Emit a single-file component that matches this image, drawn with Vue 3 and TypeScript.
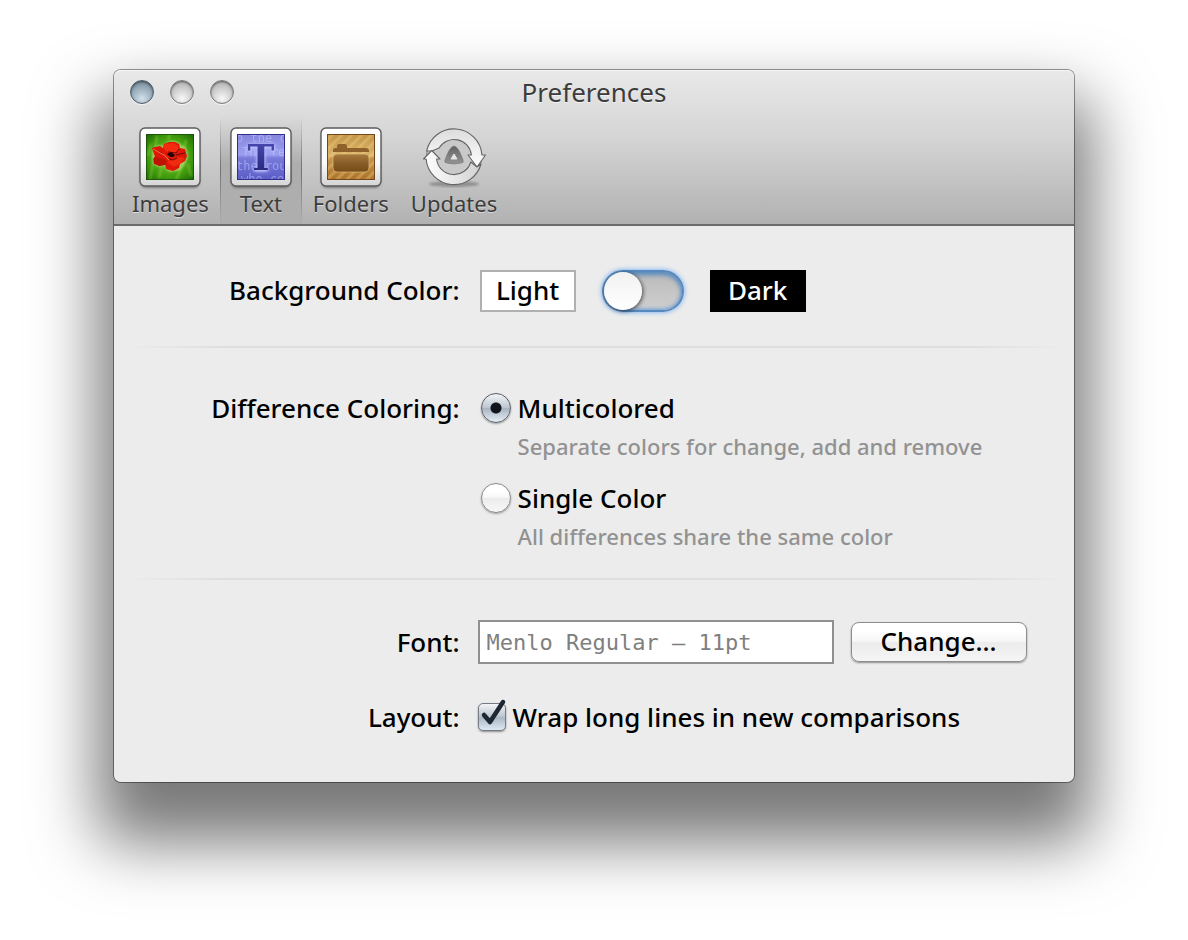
<script setup lang="ts">
import { ref } from 'vue'

type Pane = 'images' | 'text' | 'folders' | 'updates'

const panes: { id: Pane; label: string }[] = [
  { id: 'images', label: 'Images' },
  { id: 'text', label: 'Text' },
  { id: 'folders', label: 'Folders' },
  { id: 'updates', label: 'Updates' },
]
const windowButtons = ['Close', 'Minimize', 'Zoom']

const current = ref<Pane>('text')
const dark = ref(false)
const coloring = ref('multi')
const font = ref('Menlo Regular – 11pt')
const wrap = ref(true)
</script>

<template>
  <div class="desktop">
    <main class="window">
      <header class="chrome">
        <div class="titlebar">
          <div class="lights">
            <button
              v-for="(name, i) in windowButtons"
              :key="name"
              type="button"
              class="light"
              :class="{ active: i === 0 }"
              :aria-label="name"
            ></button>
          </div>
          <h1 class="title">Preferences</h1>
        </div>

        <nav class="toolbar">
          <button
            v-for="pane in panes"
            :key="pane.id"
            type="button"
            class="tool"
            :class="{ selected: current === pane.id }"
            @click="current = pane.id"
          >
            <svg v-if="pane.id === 'images'" class="icon" viewBox="0 0 64 64" aria-hidden="true">
              <defs>
                <linearGradient id="frame" x2="0" y2="1">
                  <stop offset="0" stop-color="#fff" />
                  <stop offset=".6" stop-color="#fafafa" />
                  <stop offset="1" stop-color="#d4d4d4" />
                </linearGradient>
                <radialGradient id="grass" cx=".5" cy=".5" r=".75">
                  <stop offset="0" stop-color="#7cc832" />
                  <stop offset=".6" stop-color="#3f9a0c" />
                  <stop offset="1" stop-color="#175a02" />
                </radialGradient>
                <filter id="soft"><feGaussianBlur stdDeviation="1.3" /></filter>
                <clipPath id="photo"><rect x="8" y="8" width="48" height="46" /></clipPath>
              </defs>
              <rect x="2" y="4" width="60" height="58" rx="6" fill="#000" opacity=".35" filter="url(#soft)" />
              <rect x="2" y="2" width="60" height="58" rx="5" fill="url(#frame)" stroke="#5c5c5c" stroke-width="1.4" />
              <rect x="8" y="8" width="48" height="46" fill="url(#grass)" />
              <g clip-path="url(#photo)">
                <g stroke="#9ad84a" stroke-width="2" opacity=".5" filter="url(#soft)">
                  <path d="M12 54L15 36M21 52L24 40M48 14L45 28M38 54L43 42M17 22L19 10M30 14L32 8M53 50L50 38M10 30L13 18" />
                </g>
                <path d="M14 26C15 20 21 18 26 20C28 14 39 13 43 19C49 20 52 29 48 36C45 42 43 45 37 45C31 47 27 44 26 39C20 43 15 39 14 34Z" fill="#d8e890" opacity=".6" filter="url(#soft)" />
              </g>
              <path d="M14 22L17 21L22 20L25 22L26 18L31 16L37 16L41 18L42 22L47 23L49 30L47 35L42 38L41 42L35 45L28 43L27 38L22 40L16 38L15 33L17 31Z" fill="#df1607" />
              <path d="M25 22L27 18L36 17L40 20L41 25L37 28L29 26Z" fill="#f42a10" />
              <path d="M16 31L25 33L29 35L27 39L21 40L16 37Z" fill="#bc1305" />
              <path d="M29 36L40 31L47 32L42 38L36 41Z" fill="#ef2b10" />
              <path d="M16 24L24 27L28 32L35 34L39 32M30 26L38 27L41 23M38 29L47 27" fill="none" stroke="#6e0803" stroke-width="1" />
              <path d="M15 23L26 29L31 34" fill="none" stroke="#ff6037" stroke-width="1.2" />
              <path d="M29 28L33 26L37 29L35 31L32 31Z" fill="#230303" />
              <rect x="8.5" y="8.5" width="47" height="45" fill="none" stroke="#164b05" opacity=".75" />
            </svg>

            <svg v-else-if="pane.id === 'text'" class="icon" viewBox="0 0 64 64" aria-hidden="true">
              <defs>
                <linearGradient id="page" x2="0" y2="1">
                  <stop offset="0" stop-color="#8584dd" />
                  <stop offset=".45" stop-color="#9c9ff0" />
                  <stop offset=".52" stop-color="#797bd9" />
                  <stop offset="1" stop-color="#5a5bc6" />
                </linearGradient>
                <linearGradient id="letter" x2="0" y2="1">
                  <stop offset="0" stop-color="#4d4fba" />
                  <stop offset="1" stop-color="#202274" />
                </linearGradient>
                <clipPath id="sheet"><rect x="8" y="8" width="48" height="46" /></clipPath>
              </defs>
              <rect x="2" y="4" width="60" height="58" rx="6" fill="#000" opacity=".35" filter="url(#soft)" />
              <rect x="2" y="2" width="60" height="58" rx="5" fill="url(#frame)" stroke="#5c5c5c" stroke-width="1.4" />
              <rect x="8" y="8" width="48" height="46" fill="url(#page)" />
              <g class="backtext" clip-path="url(#sheet)">
                <text x="7" y="16">o the c</text>
                <text x="13" y="30">Thr re</text>
                <text x="7" y="44">the rou</text>
                <text x="12" y="57">who co</text>
              </g>
              <text class="letter" x="32" y="44" text-anchor="middle" fill="url(#letter)">T</text>
              <rect x="8.5" y="8.5" width="47" height="45" fill="none" stroke="#2e2f86" />
            </svg>

            <svg v-else-if="pane.id === 'folders'" class="icon" viewBox="0 0 64 64" aria-hidden="true">
              <defs>
                <linearGradient id="wood" x2="0" y2="1">
                  <stop offset="0" stop-color="#c39544" />
                  <stop offset=".48" stop-color="#dcb66b" />
                  <stop offset=".52" stop-color="#c4944a" />
                  <stop offset="1" stop-color="#ad7428" />
                </linearGradient>
                <linearGradient id="leather" x2="0" y2="1">
                  <stop offset="0" stop-color="#a87c3c" />
                  <stop offset=".45" stop-color="#8c602a" />
                  <stop offset="1" stop-color="#774b17" />
                </linearGradient>
                <pattern id="stripes" width="7" height="7" patternUnits="userSpaceOnUse" patternTransform="rotate(45)">
                  <rect width="3" height="7" fill="#f3d592" opacity=".3" />
                </pattern>
              </defs>
              <rect x="2" y="4" width="60" height="58" rx="6" fill="#000" opacity=".35" filter="url(#soft)" />
              <rect x="2" y="2" width="60" height="58" rx="5" fill="url(#frame)" stroke="#5c5c5c" stroke-width="1.4" />
              <rect x="8" y="8" width="48" height="46" fill="url(#wood)" />
              <rect x="8" y="8" width="48" height="46" fill="url(#stripes)" />
              <path d="M14 26V24Q14 22 16 22H18V20Q18 18 20 18H26Q28 18 28 20V22H47Q50 22 50 25V26Z" fill="#8f622b" />
              <path d="M14 32Q14 28 18 28H46Q50 28 50 32V42Q50 46 46 46H18Q14 46 14 42Z" fill="url(#leather)" stroke="#e0bd7b" stroke-width=".7" />
              <rect x="8.5" y="8.5" width="47" height="45" fill="none" stroke="#74471a" />
            </svg>

            <svg v-else class="icon" viewBox="0 0 64 64" aria-hidden="true">
              <defs>
                <linearGradient id="ringR" x2="0" y2="1">
                  <stop offset="0" stop-color="#dcdcdc" />
                  <stop offset="1" stop-color="#fff" />
                </linearGradient>
                <linearGradient id="ringL">
                  <stop offset="0" stop-color="#fff" />
                  <stop offset="1" stop-color="#d2d2d2" />
                </linearGradient>
                <linearGradient id="delta" x2="0" y2="1">
                  <stop offset="0" stop-color="#626262" />
                  <stop offset="1" stop-color="#959595" />
                </linearGradient>
              </defs>
              <ellipse cx="32" cy="58" rx="25" ry="3" fill="#555" opacity=".45" filter="url(#soft)" />
              <circle cx="32" cy="31" r="27.5" fill="#c9c9c9" stroke="#777" />
              <g stroke="#666" stroke-width="1.1" stroke-linejoin="round">
                <path d="M4.600 25A28 28 0 0 1 59.900 29H63.500L55 41L46 29H49.400A17.500 17.500 0 0 0 17 22L10 25Z" fill="url(#ringR)" />
                <path d="M9.700 24.500L18 33H14.600A17.500 17.500 0 0 0 48.800 36L55 41L59 38A28 28 0 0 1 4.100 33H1.500Z" fill="url(#ringL)" />
              </g>
              <path d="M32 20Q36 20 41 34Q42 37 39 37Q32 39 25 37Q22 37 23 34Q28 20 32 20Z" fill="url(#delta)" stroke="#787878" stroke-width=".7" />
              <path d="M32 28L35 33H29Z" fill="#e4e4e4" stroke="#e4e4e4" stroke-linejoin="round" />
            </svg>
            <span class="tool-label">{{ pane.label }}</span>
          </button>
        </nav>
      </header>

      <form class="content" @submit.prevent>
        <section class="group background">
          <label class="caption" for="dark">Background Color:</label>
          <div class="field swatches">
            <span class="swatch lite">Light</span>
            <input id="dark" v-model="dark" class="switch" type="checkbox" role="switch" />
            <span class="swatch black">Dark</span>
          </div>
        </section>

        <section class="group coloring" role="radiogroup" aria-labelledby="coloring-caption">
          <span id="coloring-caption" class="caption">Difference Coloring:</span>
          <div class="field options">
            <div class="option">
              <label class="choice">
                <input v-model="coloring" class="radio" type="radio" name="coloring" value="multi" />
                Multicolored
              </label>
              <p class="hint">Separate colors for change, add and remove</p>
            </div>
            <div class="option">
              <label class="choice">
                <input v-model="coloring" class="radio" type="radio" name="coloring" value="single" />
                Single Color
              </label>
              <p class="hint">All differences share the same color</p>
            </div>
          </div>
        </section>

        <section class="group misc">
          <label class="caption" for="font">Font:</label>
          <div class="field font-row">
            <input id="font" v-model="font" class="font-name" type="text" readonly />
            <button type="button" class="change">Change…</button>
          </div>
          <span class="caption">Layout:</span>
          <div class="field">
            <label class="choice">
              <span class="tick">
                <input v-model="wrap" class="box" type="checkbox" />
                <svg v-if="wrap" class="mark" viewBox="0 0 32 34" aria-hidden="true">
                  <path d="M7 18L13 25L26 5" fill="none" stroke="#1b2733" stroke-width="4.500" stroke-linecap="round" stroke-linejoin="round" />
                </svg>
              </span>
              Wrap long lines in new comparisons
            </label>
          </div>
        </section>
      </form>
    </main>
  </div>
</template>

<style>
body {
  background: #fff;
}
</style>

<style scoped>
.desktop {
  box-sizing: border-box;
  min-height: 100vh;
  padding: 69px 113px 157px;
  overflow: hidden;
  font-family: "Noto Sans", "Open Sans", sans-serif;
  font-size: 26px;
  font-weight: 500;
  line-height: 36px;
  color: #000;
}
.window {
  border: 1px solid rgba(0, 0, 0, .4);
  border-radius: 8px;
  background: #ececec;
  background-clip: padding-box;
  box-shadow: 0 44px 64px 16px rgba(0, 0, 0, .53);
}
.chrome {
  border-bottom: 2px solid #6b6b6b;
  border-radius: 7px 7px 0 0;
  background: linear-gradient(#e9e9e9, #d4d4d4 45%, #b1b1b1);
  box-shadow: inset 0 1px #f6f6f6;
}
.titlebar {
  display: grid;
  grid-template-columns: 1fr auto 1fr;
  align-items: center;
  height: 44px;
  padding: 0 16px 2px;
}
.lights {
  display: flex;
  gap: 16px;
}
.light {
  width: 24px;
  height: 24px;
  padding: 0;
  border: 1px solid #7d7d7d;
  border-radius: 50%;
  background: radial-gradient(circle at 50% 80%, #f8f8f8, #d2d2d2 45%, #b4b4b4 80%);
  box-shadow: inset 0 1px 2px rgba(0, 0, 0, .5), 0 1px rgba(255, 255, 255, .7);
}
.light.active {
  border-color: #4f5d68;
  background: radial-gradient(circle at 50% 80%, #d3e1eb, #9aaebd 50%, #738795 85%);
}
.title {
  margin: 0;
  font-size: 26px;
  font-weight: 400;
  line-height: 36px;
  color: #3c3c3c;
  text-shadow: 0 1px rgba(255, 255, 255, .6);
}
.toolbar {
  display: flex;
  height: 108px;
  padding-left: 7px;
}
.tool {
  display: flex;
  flex-direction: column;
  align-items: center;
  box-sizing: border-box;
  min-width: 82px;
  padding: 10px 0 0;
  border: 0;
  background: none;
  font: inherit;
  color: #3c3c3c;
}
.tool.selected {
  background:
    linear-gradient(transparent, rgba(0, 0, 0, .35) 50%, transparent) left / 1px 100% no-repeat,
    linear-gradient(transparent, rgba(0, 0, 0, .35) 50%, transparent) right / 1px 100% no-repeat,
    linear-gradient(rgba(0, 0, 0, 0), rgba(0, 0, 0, .14) 45%, rgba(0, 0, 0, .02));
}
.icon {
  width: 64px;
  height: 64px;
}
.tool-label {
  padding: 0 11px;
  font-size: 22px;
  font-weight: 400;
  line-height: 26px;
  text-shadow: 0 1px rgba(255, 255, 255, .5);
}
.backtext {
  font-family: "DejaVu Sans Mono", monospace;
  font-size: 12px;
  font-weight: 400;
  fill: #c3c5ff;
  opacity: .55;
}
.letter {
  font-family: "DejaVu Serif", serif;
  font-size: 36px;
  font-weight: 700;
  filter: drop-shadow(0 1px 1px #c9cbff) drop-shadow(0 0 2px #b8baff);
}
.group {
  display: grid;
  grid-template-columns: 36% 1fr;
  column-gap: 18px;
  align-items: center;
}
.group + .group {
  border-top: 2px solid;
  border-image: linear-gradient(90deg, transparent 1%, #dedede 12%, #dedede 88%, transparent 99%) 1;
}
.background {
  padding: 44px 0 34px;
}
.coloring {
  padding: 42px 0 27px;
  align-items: start;
}
.misc {
  padding: 40px 0 47px;
  row-gap: 35px;
}
.caption {
  text-align: right;
  white-space: nowrap;
}
.background .caption {
  padding-bottom: 2px;
}
.swatches {
  display: flex;
  align-items: center;
  gap: 26px;
  padding-left: 2px;
}
.swatch {
  box-sizing: border-box;
  width: 96px;
  height: 42px;
  border: 2px solid #b0b0b0;
  background: #fff;
  line-height: 36px;
  text-align: center;
}
.swatch.black {
  border-color: #000;
  background: #000;
  color: #fff;
}
.switch {
  appearance: none;
  box-sizing: border-box;
  width: 82px;
  height: 42px;
  margin: 0;
  padding: 0;
  border: 2px solid #5789bf;
  border-radius: 21px;
  background: linear-gradient(#bababa, #cfcfcf);
  box-shadow: 0 0 4px 1px #8fbdf2, inset 0 3px 5px #5588bb, inset 0 -1px 4px #6f9fd4;
}
.switch::before {
  content: "";
  display: block;
  width: 38px;
  height: 38px;
  border-radius: 50%;
  background: linear-gradient(#f1f1f1, #fff);
  box-shadow: 1px 1px 4px rgba(0, 0, 0, .65);
}
.switch:checked::before {
  margin-left: auto;
}
.options {
  display: grid;
  gap: 19px;
  padding-left: 3px;
}
.option {
  display: grid;
  gap: 5px;
}
.choice {
  display: flex;
  align-items: center;
  gap: 7px;
}
.radio {
  appearance: none;
  flex: none;
  box-sizing: border-box;
  width: 30px;
  height: 30px;
  margin: 0;
  border: 1px solid #8a8a8a;
  border-radius: 50%;
  background: linear-gradient(#fff 25%, #f6f6f6 48%, #ebebeb 50%, #f8f8f8);
  box-shadow: 0 1px 2px rgba(0, 0, 0, .35);
}
.radio:checked {
  border-color: #5b6068;
  background:
    radial-gradient(circle, #10151c 5px, transparent 6px),
    linear-gradient(#f2f4f7, #bfc7d1 48%, #a6b2c0 50%, #e6eff6);
}
.hint {
  margin: 0 0 0 37px;
  font-size: 22px;
  line-height: 30px;
  color: #929292;
}
.font-row {
  display: flex;
  align-items: center;
  gap: 17px;
}
.font-name {
  box-sizing: border-box;
  width: 356px;
  height: 44px;
  padding: 0 7px;
  border: 2px solid #8e918e;
  background: #fff;
  font-family: "DejaVu Sans Mono", monospace;
  font-size: 22px;
  color: #7f7f7f;
}
.change {
  box-sizing: border-box;
  width: 176px;
  height: 40px;
  padding: 0 0 2px;
  border: 1px solid #8c8c8c;
  border-radius: 8px;
  background: linear-gradient(#fff 20%, #f7f7f7 48%, #ececec 52%, #f5f5f5);
  box-shadow: 0 1px 2px rgba(0, 0, 0, .4);
  font: inherit;
  color: #000;
}
.tick {
  position: relative;
  display: flex;
}
.box {
  appearance: none;
  box-sizing: border-box;
  width: 28px;
  height: 28px;
  margin: 0;
  border: 1px solid #747b83;
  border-radius: 5px;
  background: linear-gradient(#f2f4f7, #bcc5d0 48%, #a9b5c2 50%, #dce8f2);
  box-shadow: 0 1px 2px rgba(0, 0, 0, .4);
}
.mark {
  position: absolute;
  left: -1px;
  bottom: 0;
  width: 32px;
  height: 34px;
  pointer-events: none;
}
</style>
